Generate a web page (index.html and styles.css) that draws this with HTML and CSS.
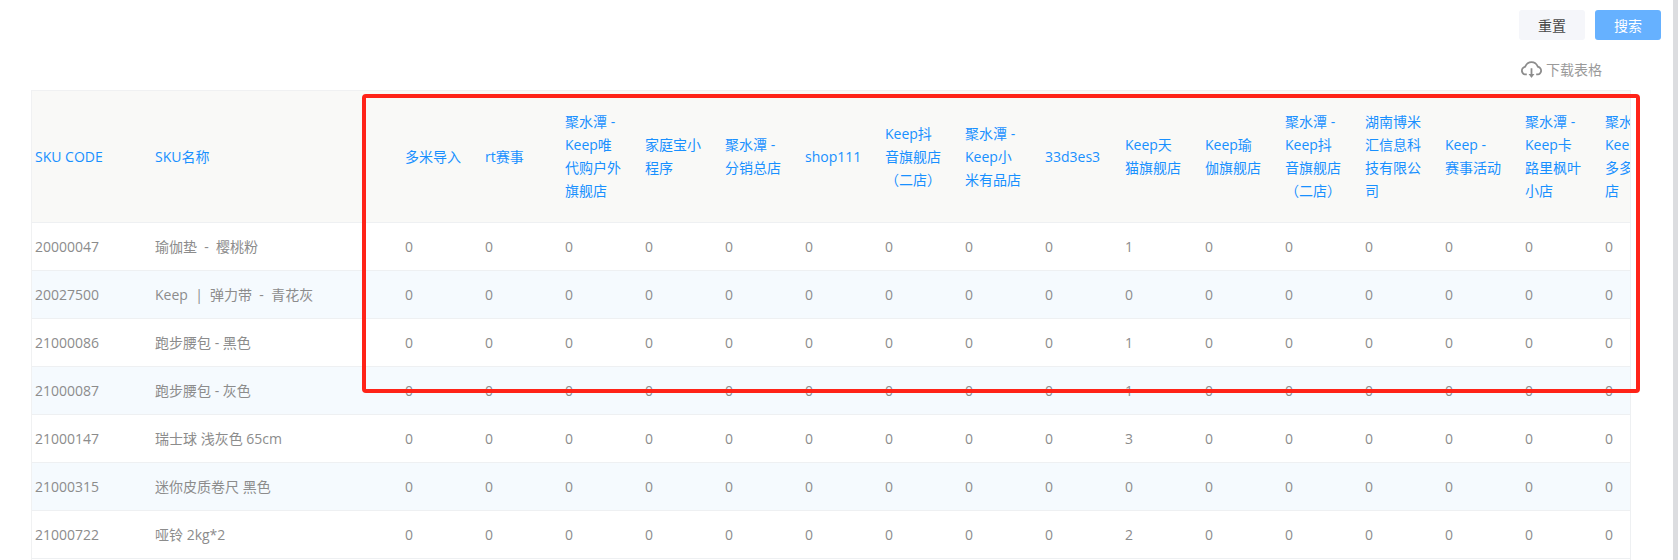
FILE: index.html
```html
<!DOCTYPE html>
<html lang="zh-CN">
<head>
<meta charset="utf-8">
<title>SKU 库存</title>
<link rel="stylesheet" href="styles.css">
</head>
<body>
<div class="page">
  <main class="main">
    <div class="actions">
      <button class="btn btn-reset" type="button">重置</button>
      <button class="btn btn-search" type="button">搜索</button>
    </div>
    <div class="download">
      <svg class="download-icon" viewBox="64 160 896 704" aria-hidden="true"><path d="M624 706.3h-74.1V464c0-4.4-3.6-8-8-8h-60c-4.4 0-8 3.6-8 8v242.3H400c-6.7 0-10.4 7.7-6.3 12.9l112 141.7a8 8 0 0 0 12.6 0l112-141.7c4.1-5.2.4-12.9-6.3-12.9z"/><path d="M811.4 366.7C765.6 245.9 648.9 160 512.2 160S258.8 245.8 213 366.6C127.3 389.1 64 467.2 64 560c0 110.5 89.5 200 199.9 200H304c4.4 0 8-3.6 8-8v-60c0-4.4-3.6-8-8-8h-40.1c-33.7 0-65.4-13.4-89-37.7-23.5-24.2-36-56.8-34.9-90.6.9-26.4 9.9-51.2 26.2-72.1 16.7-21.3 40.1-36.8 66.1-43.7l37.9-9.9 13.9-36.6c8.6-22.8 20.6-44.1 35.7-63.4a245.6 245.6 0 0 1 52.4-49.9c41.1-28.9 89.5-44.2 140-44.2s98.9 15.3 140 44.2c19.9 14 37.5 30.8 52.4 49.9 15.1 19.3 27.1 40.6 35.7 63.4l13.8 36.5 37.8 10C846.1 454.5 884 503.8 884 560c0 33.1-12.9 64.3-36.3 87.7a123.07 123.07 0 0 1-87.6 36.3H720c-4.4 0-8 3.6-8 8v60c0 4.4 3.6 8 8 8h40.1C870.5 760 960 670.5 960 560c0-92.7-63.1-170.7-148.6-193.3z"/></svg>
      <span>下载表格</span>
    </div>
    <div class="table-wrap">
      <table class="grid">
        <colgroup>
          <col class="col-code"><col class="col-name">
          <col class="col-n"><col class="col-n"><col class="col-n"><col class="col-n"><col class="col-n"><col class="col-n"><col class="col-n"><col class="col-n"><col class="col-n"><col class="col-n"><col class="col-n"><col class="col-n"><col class="col-n"><col class="col-n"><col class="col-n"><col class="col-n">
        </colgroup>
        <thead>
          <tr>
            <th>SKU CODE</th><th>SKU名称</th>
            <th>多米导入</th><th>rt赛事</th><th>聚水潭 - Keep唯代购户外旗舰店</th><th>家庭宝小程序</th><th>聚水潭 - 分销总店</th><th>shop111</th><th>Keep抖音旗舰店（二店）</th><th>聚水潭 - Keep小米有品店</th><th>33d3es3</th><th>Keep天猫旗舰店</th><th>Keep瑜伽旗舰店</th><th>聚水潭 - Keep抖音旗舰店（二店）</th><th>湖南博米汇信息科技有限公司</th><th>Keep -<br>赛事活动</th><th>聚水潭 - Keep卡路里枫叶小店</th><th>聚水潭 - Keep拼多多旗舰店</th>
          </tr>
        </thead>
        <tbody>
          <tr><td>20000047</td><td>瑜伽垫&nbsp; -&nbsp; 樱桃粉</td><td>0</td><td>0</td><td>0</td><td>0</td><td>0</td><td>0</td><td>0</td><td>0</td><td>0</td><td>1</td><td>0</td><td>0</td><td>0</td><td>0</td><td>0</td><td>0</td></tr>
          <tr><td>20027500</td><td>Keep&nbsp; |&nbsp; 弹力带&nbsp; -&nbsp; 青花灰</td><td>0</td><td>0</td><td>0</td><td>0</td><td>0</td><td>0</td><td>0</td><td>0</td><td>0</td><td>0</td><td>0</td><td>0</td><td>0</td><td>0</td><td>0</td><td>0</td></tr>
          <tr><td>21000086</td><td>跑步腰包 - 黑色</td><td>0</td><td>0</td><td>0</td><td>0</td><td>0</td><td>0</td><td>0</td><td>0</td><td>0</td><td>1</td><td>0</td><td>0</td><td>0</td><td>0</td><td>0</td><td>0</td></tr>
          <tr><td>21000087</td><td>跑步腰包 - 灰色</td><td>0</td><td>0</td><td>0</td><td>0</td><td>0</td><td>0</td><td>0</td><td>0</td><td>0</td><td>1</td><td>0</td><td>0</td><td>0</td><td>0</td><td>0</td><td>0</td></tr>
          <tr><td>21000147</td><td>瑞士球 浅灰色 65cm</td><td>0</td><td>0</td><td>0</td><td>0</td><td>0</td><td>0</td><td>0</td><td>0</td><td>0</td><td>3</td><td>0</td><td>0</td><td>0</td><td>0</td><td>0</td><td>0</td></tr>
          <tr><td>21000315</td><td>迷你皮质卷尺 黑色</td><td>0</td><td>0</td><td>0</td><td>0</td><td>0</td><td>0</td><td>0</td><td>0</td><td>0</td><td>0</td><td>0</td><td>0</td><td>0</td><td>0</td><td>0</td><td>0</td></tr>
          <tr><td>21000722</td><td>哑铃 2kg*2</td><td>0</td><td>0</td><td>0</td><td>0</td><td>0</td><td>0</td><td>0</td><td>0</td><td>0</td><td>2</td><td>0</td><td>0</td><td>0</td><td>0</td><td>0</td><td>0</td></tr>
        </tbody>
      </table>
    </div>
    <div class="highlight"></div>
  </main>
  <div class="scroll-track"></div>
</div>
</body>
</html>
```
FILE: styles.css
```css
* { box-sizing: border-box; }
html, body { margin: 0; height: 100%; overflow: hidden; background: #fff; }
body { font-family: "Open Sans", "Noto Sans CJK SC", sans-serif; font-size: 14px; color: #8c8c8c; }
.page { display: flex; height: 560px; overflow: hidden; }
.main { position: relative; flex: 1; min-width: 0; padding: 10px 12px 0 31px; }
.scroll-track { width: 5px; background: #dcdde0; }

.actions { display: flex; justify-content: flex-end; gap: 10px; }
.btn { width: 66px; height: 30px; border: 0; border-radius: 3px; padding: 0; font: inherit; cursor: pointer; }
.btn-reset { background: #f5f6fa; color: #484848; }
.btn-search { background: #66b1ff; color: #fff; }

.download { display: flex; align-items: center; justify-content: flex-end; gap: 4px; height: 20px; margin: 19px 59px 0 0; color: #9a9a9a; }
.download-icon { width: 21px; height: 17px; fill: #8c8c8c; }

.table-wrap { width: 1600px; height: 480px; margin-top: 11px; overflow: hidden; border: 1px solid #f0f1f2; border-bottom: 0; border-right-color: #eef0f2; }
.grid { width: 1570px; table-layout: fixed; border-collapse: collapse; }
.col-code { width: 120px; }
.col-name { width: 250px; }
.col-n { width: 80px; }
.grid th { height: 131px; padding: 0 18px 0 3px; background: #f9f9f7; color: #1890ff; font-weight: 400; line-height: 23px; text-align: left; border-bottom: 1px solid #eef0f2; }
.grid td { height: 48px; padding: 0 3px; border-bottom: 1px solid #eef0f2; white-space: nowrap; }
.grid tbody tr:nth-child(even) td { background: #f5fafe; }

.highlight { position: absolute; left: 362px; top: 94px; width: 1278px; height: 299px; border: 4px solid #ff2318; border-radius: 4px; pointer-events: none; }
```
